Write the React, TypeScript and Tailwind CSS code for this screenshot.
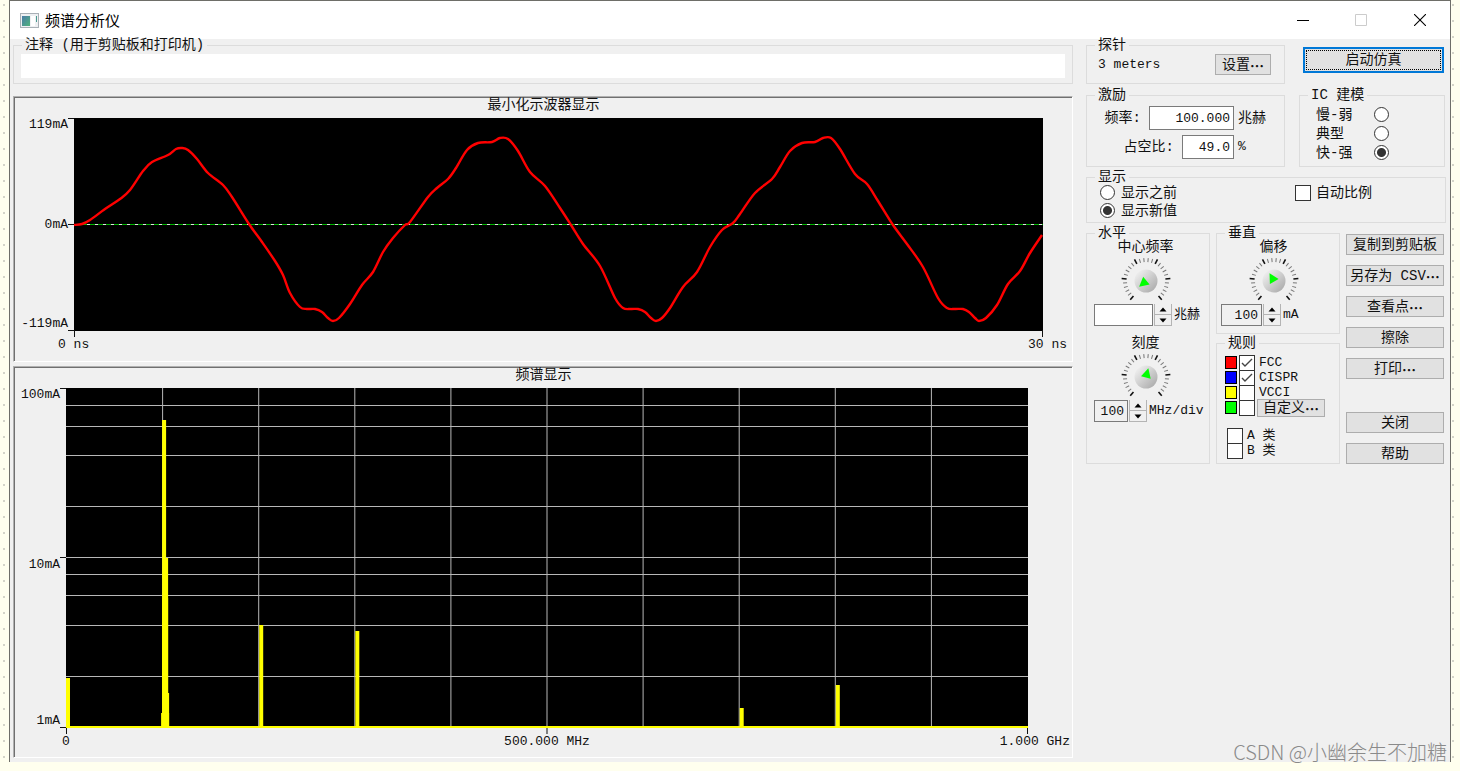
import { useState, type ReactNode } from "react";
import clsx from "clsx";

// y values are measured from the top edge of the 969x213 plot
const WAVE: [number, number][] = [
  [0, 107], [8, 106], [16, 102], [31, 91], [46, 81], [56, 72], [69, 53], [78, 44],
  [94, 37], [102, 31], [108, 30], [114, 32], [123, 41], [134, 55], [149, 67], [158, 79],
  [175, 106], [188, 124], [201, 143], [209, 157], [216, 175], [226, 189], [233, 191], [241, 191],
  [248, 194], [254, 200], [259, 203], [265, 200], [276, 186], [288, 167], [299, 154], [309, 134],
  [319, 120], [331, 107], [336, 104], [354, 79], [363, 70], [374, 61], [382, 50], [393, 32],
  [404, 25], [418, 24], [426, 20], [434, 21], [444, 33], [456, 54], [471, 68], [486, 90],
  [497, 107], [509, 126], [526, 148], [541, 180], [549, 190], [557, 191], [564, 191], [571, 194],
  [577, 200], [582, 203], [588, 200], [596, 190], [609, 169], [623, 154], [636, 129], [648, 112],
  [659, 105], [666, 96], [681, 75], [698, 61], [706, 49], [716, 33], [728, 25], [741, 24],
  [749, 20], [757, 20], [766, 31], [781, 56], [793, 66], [804, 83], [819, 107], [833, 126],
  [849, 149], [864, 180], [873, 190], [881, 191], [889, 191], [895, 194], [901, 200], [905, 203],
  [912, 200], [923, 187], [934, 166], [946, 153], [956, 135], [968, 117],
];

const FREQ_LINES = [96, 192, 288, 384, 480, 576, 672, 768, 864];
const LEVEL_LINES = [17, 38, 67, 118, 169, 186, 207, 237, 288];

// x, width, top of every spectral peak
const PEAKS = [
  [0, 4, 290],
  [95, 8, 325],
  [96, 6, 210],
  [96, 4, 32],
  [98, 4, 170],
  [101, 2, 305],
  [193, 4, 237],
  [289, 4, 243],
  [673, 4, 320],
  [769, 4, 297],
];

function smoothPath(points: [number, number][]) {
  let d = `M${points[0][0]} ${points[0][1]}`;
  for (let i = 0; i < points.length - 1; i++) {
    const p0 = points[i - 1] ?? points[i];
    const p1 = points[i];
    const p2 = points[i + 1];
    const p3 = points[i + 2] ?? p2;
    d += `C${p1[0] + (p2[0] - p0[0]) / 6} ${p1[1] + (p2[1] - p0[1]) / 6} ${p2[0] - (p3[0] - p1[0]) / 6} ${p2[1] - (p3[1] - p1[1]) / 6} ${p2[0]} ${p2[1]}`;
  }
  return d;
}

function Dots() {
  return <span className="font-['Noto_Sans_CJK_SC',sans-serif] font-bold">…</span>;
}

function Group({ title, className, children }: { title: string; className?: string; children: ReactNode }) {
  return (
    <fieldset className={clsx("min-w-0 border border-[#dcdcdc]", className)}>
      <legend className="ml-2 bg-[#f0f0f0] px-[3px] leading-[12px]">{title}</legend>
      {children}
    </fieldset>
  );
}

function PushButton({ className, children }: { className?: string; children: ReactNode }) {
  return (
    <button
      type="button"
      className={clsx(
        "flex items-center justify-center border border-[#adadad] bg-[#e1e1e1] leading-[14px] whitespace-nowrap hover:bg-[#e5f1fb]",
        className ?? "h-[21px] w-full",
      )}
    >
      {children}
    </button>
  );
}

function Radio({ name, label, checked, onChange, after }: { name: string; label: string; checked: boolean; onChange: () => void; after?: boolean }) {
  return (
    <label className="flex items-center gap-[6px] leading-[14px]">
      {after && <span className="w-[52px]">{label}</span>}
      <input
        type="radio"
        name={name}
        checked={checked}
        onChange={onChange}
        className="h-[15px] w-[15px] shrink-0 appearance-none rounded-full border border-[#333] bg-white checked:bg-[radial-gradient(circle,#333_4px,#fff_5px)]"
      />
      {!after && <span>{label}</span>}
    </label>
  );
}

function Check({ id, defaultChecked, label }: { id: string; defaultChecked?: boolean; label?: string }) {
  return (
    <span className="grid shrink-0">
      <input
        id={id}
        type="checkbox"
        aria-label={label}
        defaultChecked={defaultChecked}
        className="peer col-start-1 row-start-1 h-[16px] w-[16px] appearance-none border border-[#333] bg-white"
      />
      <svg viewBox="0 0 16 16" className="pointer-events-none invisible col-start-1 row-start-1 h-[16px] w-[16px] peer-checked:visible">
        <path d="M3 8l3 3 7-7" fill="none" stroke="#444" strokeWidth="1.4" />
      </svg>
    </span>
  );
}

function Knob({ angle, label }: { angle: number; label: string }) {
  const id = `knob-${angle}`;
  const ticks = [];
  for (let i = 0; i <= 25; i++) {
    const deg = -140 + (i * 280) / 25;
    const major = i % 5 === 0;
    ticks.push(
      <line
        key={i}
        x1="25"
        x2="25"
        y1={major ? 0.5 : 2}
        y2={major ? 5.5 : 6}
        stroke={major ? "#111" : "#777"}
        strokeWidth={major ? 1.6 : 1}
        transform={`rotate(${deg} 25 25)`}
      />,
    );
  }
  return (
    <svg viewBox="0 0 50 46" className="mt-[2px] h-[46px] w-[50px]" role="img" aria-label={label}>
      <defs>
        <linearGradient id={id} x1="0" y1="0" x2="1" y2="1">
          <stop offset="0.1" stopColor="#f0f0f0" />
          <stop offset="1" stopColor="#a4a4a4" />
        </linearGradient>
      </defs>
      {ticks}
      <circle cx="25" cy="25" r="11.5" fill={`url(#${id})`} />
      <path d="M25 16L30 25.5H20Z" fill="#00ff00" transform={`rotate(${angle} 25 25)`} />
    </svg>
  );
}

function Stepper({ label }: { label: string }) {
  return (
    <span className="ml-px flex h-[22px] w-[18px] flex-col">
      <button type="button" aria-label={`${label} +`} className="flex flex-1 items-center justify-center border-x border-b border-[#b4b4b4]">
        <svg viewBox="0 0 8 5" className="h-[5px] w-[8px]"><path d="M4 0.5L7.5 4.5H0.5Z" /></svg>
      </button>
      <button type="button" aria-label={`${label} -`} className="flex flex-1 items-center justify-center border-x border-b border-[#b4b4b4]">
        <svg viewBox="0 0 8 5" className="h-[5px] w-[8px]"><path d="M4 4.5L0.5 0.5H7.5Z" /></svg>
      </button>
    </span>
  );
}

function Dial({ id, label, angle, value, unit, inputClass, headClass }: {
  id: string;
  label: string;
  angle: number;
  value: string;
  unit: string;
  inputClass: string;
  headClass: string;
}) {
  return (
    <div className="flex flex-col">
      <div className={clsx("flex flex-col items-center", headClass)}>
        <label htmlFor={id} className="leading-[14px]">{label}</label>
        <Knob angle={angle} label={label} />
      </div>
      <div className="mt-[2px] flex h-[22px] items-center">
        <input id={id} defaultValue={value} className={clsx("h-[22px] border border-[#7a7a7a] text-right text-[13px]", inputClass)} />
        <Stepper label={label} />
        <span className="ml-[2px] text-[13px] leading-[14px]">{unit}</span>
      </div>
    </div>
  );
}

const PANEL =
  "border border-t-[#b0b0b0] border-r-white border-b-white border-l-[#b0b0b0] shadow-[inset_1px_1px_0_#707070] pt-px pl-px";

function Oscilloscope() {
  return (
    <section className={clsx(PANEL, "mt-3 pb-[9px]")}>
      <h2 className="h-5 text-center leading-[14px]">最小化示波器显示</h2>
      <div className="flex pr-[29px]">
        <div className="flex h-[213px] w-[59px] flex-col justify-between pr-[6px] text-right text-[13px] leading-[14px]">
          <span>119mA</span>
          <span>0mA</span>
          <span>-119mA</span>
        </div>
        <div className="min-w-0 flex-1">
          <svg viewBox="0 0 969 213" preserveAspectRatio="none" className="h-[213px] w-full overflow-visible">
            <rect width="969" height="213" fill="#000" />
            <path d="M-6 0.5H0M-6 106.5H0M-6 212.5H0M0.5 212V219M968.5 212V219" stroke="#111" />
            <path d="M0 106.5H969" stroke="#e0e0e0" />
            <path d="M0 106.5H969" stroke="#00b400" strokeDasharray="5 3" />
            <path d={smoothPath(WAVE)} fill="none" stroke="#f00" strokeWidth="2.4" />
          </svg>
          <div className="flex justify-between pt-[7px] text-[13px] leading-[14px]">
            <span className="-ml-4">0 ns</span>
            <span className="-mr-6">30 ns</span>
          </div>
        </div>
      </div>
    </section>
  );
}

function Spectrum() {
  return (
    <section className={clsx(PANEL, "mt-1 pb-[8px]")}>
      <h2 className="h-5 text-center leading-[14px]">频谱显示</h2>
      <div className="flex pr-[44px]">
        <div className="flex h-[340px] w-[51px] flex-col pr-[6px] text-right text-[13px] leading-[14px]">
          <span className="flex-1">100mA</span>
          <span className="flex flex-1 flex-col justify-between">
            <span>10mA</span>
            <span>1mA</span>
          </span>
        </div>
        <div className="min-w-0 flex-1">
          <svg viewBox="0 0 961 340" preserveAspectRatio="none" className="h-[340px] w-full overflow-visible">
            <rect width="961" height="340" fill="#000" />
            <path d="M-6 0.5H0M-6 169.5H0M-6 339.5H0M0.5 339V346M480.5 339V346M960.5 339V346" stroke="#111" />
            {FREQ_LINES.map((x) => (
              <path key={x} d={`M${x + 0.5} 0V340`} stroke="#b8b8b8" />
            ))}
            {LEVEL_LINES.map((y) => (
              <path key={y} d={`M0 ${y + 0.5}H961`} stroke="#b8b8b8" />
            ))}
            {PEAKS.map(([x, w, y]) => (
              <rect key={`${x}-${y}`} x={x} y={y} width={w} height={340 - y} fill="#ff0" />
            ))}
            <rect y="338" width="961" height="2" fill="#ff0" />
          </svg>
          <div className="grid grid-cols-3 pt-[7px] text-[13px] leading-[14px] whitespace-nowrap">
            <span className="-ml-1">0</span>
            <span className="text-center">500.000 MHz</span>
            <span className="-mr-[42px] text-right">1.000 GHz</span>
          </div>
        </div>
      </div>
    </section>
  );
}

const RULES = [
  { id: "fcc", name: "FCC", color: "bg-[#f00]", on: true },
  { id: "cispr", name: "CISPR", color: "bg-[#00f]", on: true },
  { id: "vcci", name: "VCCI", color: "bg-[#ff0]", on: false },
];

function Rules() {
  return (
    <Group title="规则" className="mt-[3px] h-[127px]">
      <div className="pt-[6px] pl-2">
        {RULES.map((rule) => (
          <div key={rule.id} className="flex h-[15px] items-center">
            <span className={clsx("mr-[2px] h-[13px] w-3 border border-black", rule.color)} />
            <Check id={rule.id} defaultChecked={rule.on} />
            <label htmlFor={rule.id} className="ml-1 text-[13px] leading-[14px]">{rule.name}</label>
          </div>
        ))}
        <div className="flex h-[15px] items-center">
          <span className="mr-[2px] h-[13px] w-3 border border-black bg-[#0f0]" />
          <Check id="custom" label="自定义" />
          <PushButton className="ml-[2px] h-[18px] w-[68px]">
            自定义<Dots />
          </PushButton>
        </div>
      </div>
      <div className="mt-[13px] pl-[10px]">
        {["A", "B"].map((c) => (
          <div key={c} className="flex h-[15px] items-center">
            <Check id={`class-${c}`} />
            <label htmlFor={`class-${c}`} className="ml-1 text-[13px] leading-[14px]">{c} 类</label>
          </div>
        ))}
      </div>
    </Group>
  );
}

function Controls() {
  const [model, setModel] = useState("快-强");
  const [shown, setShown] = useState("显示新值");

  return (
    <aside className="w-[360px] shrink-0">
      <div className="flex">
        <Group title="探针" className="h-[45px] w-[199px]">
          <div className="flex items-center justify-between pt-[3px] pr-[13px] pl-[11px]">
            <span className="text-[13px] leading-[14px]">3 meters</span>
            <PushButton className="h-[21px] w-14">
              设置<Dots />
            </PushButton>
          </div>
        </Group>
        <button type="button" className="mt-2 mr-[2px] ml-[18px] h-[26px] flex-1 border-2 border-[#0078d7] bg-[#e1e1e1] p-px">
          <span className="flex h-full items-center justify-center border border-dotted border-black leading-[14px]">启动仿真</span>
        </button>
      </div>

      <div className="mt-[5px] flex">
        <Group title="激励" className="h-[78px] w-[199px]">
          <div className="flex flex-col gap-[5px] pt-[5px] leading-[14px]">
            <div className="flex h-6 items-center justify-end">
              <label htmlFor="freq">频率:</label>
              <input id="freq" defaultValue="100.000" className="mr-1 ml-2 h-6 w-[85px] border border-[#7a7a7a] bg-white pr-[3px] text-right text-[13px]" />
              <span className="w-[46px]">兆赫</span>
            </div>
            <div className="flex h-6 items-center justify-end">
              <label htmlFor="duty">占空比:</label>
              <input id="duty" defaultValue="49.0" className="mr-1 ml-2 h-6 w-[52px] border border-[#7a7a7a] bg-white pr-[3px] text-right text-[13px]" />
              <span className="w-[46px] text-[13px]">%</span>
            </div>
          </div>
        </Group>
        <Group title="IC 建模" className="ml-[14px] h-[78px] w-[146px]">
          <div className="flex flex-col gap-1 pt-[6px] pl-4">
            {["慢-弱", "典型", "快-强"].map((m) => (
              <Radio key={m} name="model" label={m} after checked={model === m} onChange={() => setModel(m)} />
            ))}
          </div>
        </Group>
      </div>

      <Group title="显示" className="mt-1 h-[52px]">
        <div className="flex items-start pt-[2px] pl-[13px]">
          <div className="flex w-[195px] flex-col gap-[3px]">
            {["显示之前", "显示新值"].map((s) => (
              <Radio key={s} name="shown" label={s} checked={shown === s} onChange={() => setShown(s)} />
            ))}
          </div>
          <Check id="auto-scale" />
          <label htmlFor="auto-scale" className="ml-[5px] leading-4">自动比例</label>
        </div>
      </Group>

      <div className="mt-1 flex gap-[6px]">
        <Group title="水平" className="h-[237px] w-[124px]">
          <div className="flex flex-col gap-[10px] pt-px pl-[7px]">
            <Dial id="center" label="中心频率" angle={230} value="" unit="兆赫" headClass="w-[103px]" inputClass="w-[59px] bg-white px-[3px]" />
            <Dial id="scale" label="刻度" angle={15} value="100" unit="MHz/div" headClass="w-[103px]" inputClass="w-[34px] px-[3px]" />
          </div>
        </Group>
        <div className="w-[124px]">
          <Group title="垂直" className="h-[107px]">
            <div className="pt-px pl-1">
              <Dial id="offset" label="偏移" angle={-30} value="100" unit="mA" headClass="w-[105px]" inputClass="w-[41px] px-[3px]" />
            </div>
          </Group>
          <Rules />
        </div>
        <div className="flex flex-1 flex-col gap-[10px] pt-[7px] pr-[2px]">
          <PushButton>复制到剪贴板</PushButton>
          <PushButton>
            另存为 CSV<Dots />
          </PushButton>
          <PushButton>
            查看点<Dots />
          </PushButton>
          <PushButton>擦除</PushButton>
          <PushButton>
            打印<Dots />
          </PushButton>
          <div className="mt-[23px] flex flex-col gap-[10px]">
            <PushButton>关闭</PushButton>
            <PushButton>帮助</PushButton>
          </div>
        </div>
      </div>
    </aside>
  );
}

function TitleBar() {
  return (
    <header className="flex h-[38px] items-center bg-white pl-[10px] text-black">
      <svg viewBox="0 0 19 15" className="h-[15px] w-[19px]">
        <defs>
          <linearGradient id="app-icon" x1="0" y1="0" x2="1" y2="1">
            <stop offset="0" stopColor="#4a7ba6" />
            <stop offset="1" stopColor="#4fb37c" />
          </linearGradient>
        </defs>
        <rect x="0.5" y="0.5" width="18" height="14" fill="#eef0f2" stroke="#a9b0b6" />
        <rect x="2" y="3" width="8" height="10" fill="url(#app-icon)" />
        <rect x="11" y="3" width="4" height="10" fill="#fff" />
        <rect x="16" y="3" width="1" height="6" fill="#4a9a90" />
      </svg>
      <h1 className="ml-[6px] flex-1 font-['Noto_Sans_CJK_SC',sans-serif] text-[15px] leading-5">频谱分析仪</h1>
      <button type="button" aria-label="最小化" className="flex h-full w-[58px] items-center justify-center">
        <svg viewBox="0 0 12 12" className="h-3 w-3"><path d="M0 6.5H12" stroke="#000" /></svg>
      </button>
      <button type="button" aria-label="最大化" className="flex h-full w-[58px] items-center justify-center" disabled>
        <svg viewBox="0 0 12 12" className="h-3 w-3"><path d="M0.5 0.5H11.5V11.5H0.5Z" fill="none" stroke="#ccc" /></svg>
      </button>
      <button type="button" aria-label="关闭窗口" className="flex h-full w-[60px] items-center justify-center">
        <svg viewBox="0 0 12 12" className="h-3 w-3"><path d="M0 0L12 12M12 0L0 12" stroke="#000" strokeWidth="1.1" /></svg>
      </button>
    </header>
  );
}

function App() {
  return (
    <div className="relative flex min-h-screen bg-[#ffffee] pb-[9px] font-['Liberation_Mono','Noto_Sans_CJK_SC',monospace] text-sm text-[#111]">
      <div className="w-[9px] shrink-0 bg-[radial-gradient(circle_at_4px_5px,#d4d4c8_1px,transparent_1px)] bg-[size:9px_16px]" />
      <main className="flex min-w-0 flex-1 flex-col border-x border-t border-[#6e6e68] bg-[#f0f0f0]">
        <TitleBar />
        <div className="flex flex-1 gap-[13px] pr-1 pl-[3px]">
          <div className="min-w-0 flex-1">
            <Group title="注释 (用于剪贴板和打印机)" className="h-[45px]">
              <div className="px-[7px] pt-[3px]">
                <input aria-label="注释" className="block h-6 w-full bg-white px-1 outline-none" />
              </div>
            </Group>
            <Oscilloscope />
            <Spectrum />
          </div>
          <Controls />
        </div>
      </main>
      <div className="w-[9px] shrink-0 bg-[radial-gradient(circle_at_2px_5px,#d4d4c8_1px,transparent_1px)] bg-[size:9px_16px]" />
      <p className="pointer-events-none absolute right-[13px] bottom-[7px] font-['Noto_Sans_CJK_SC',sans-serif] text-xl leading-6 font-light text-[#8a8a8a]">
        CSDN @小幽余生不加糖
      </p>
    </div>
  );
}

export default App;
